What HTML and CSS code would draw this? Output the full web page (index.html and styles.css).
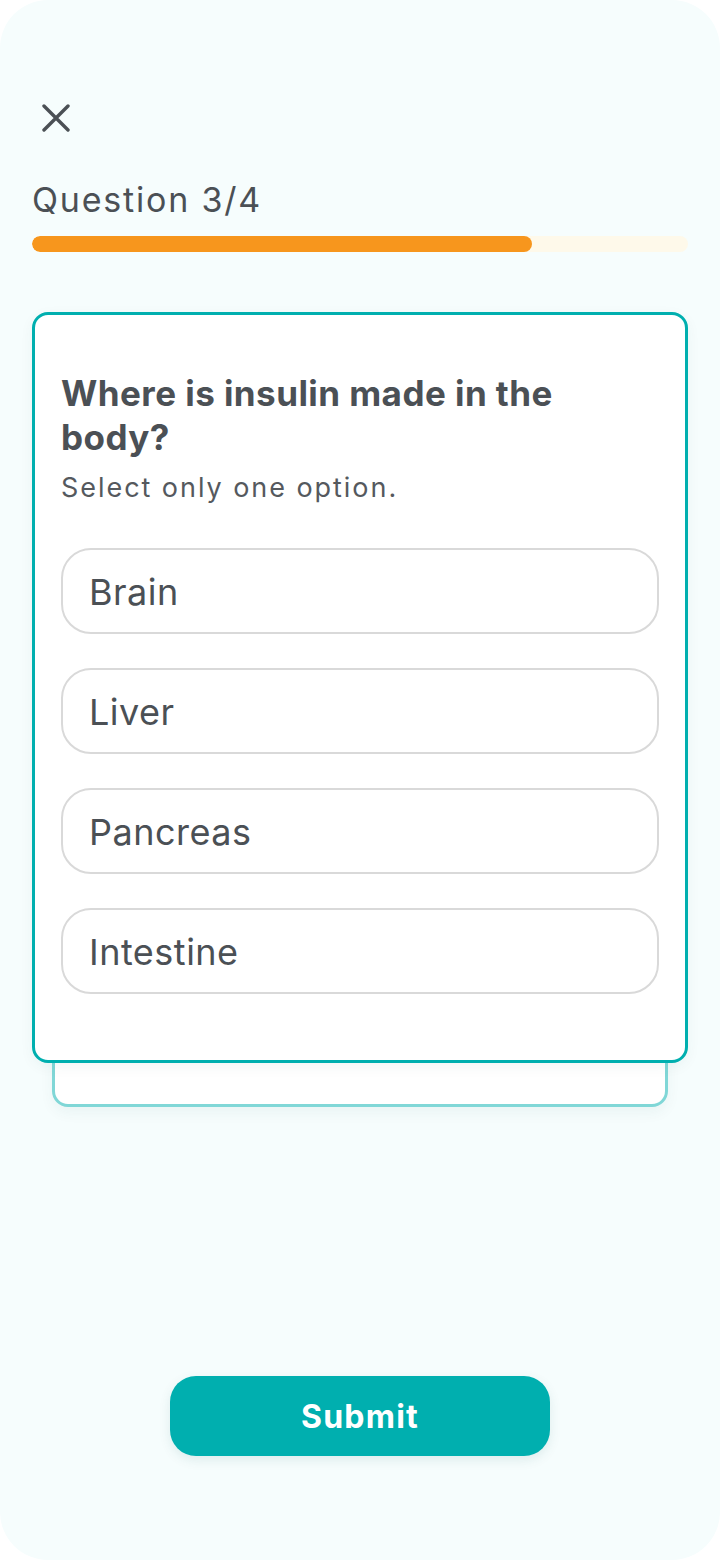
FILE: index.html
```html
<!DOCTYPE html>
<html lang="en">
<head>
<meta charset="utf-8">
<title>Quiz</title>
<link rel="stylesheet" href="styles.css">
</head>
<body>
<main class="frame">
  <button class="close" aria-label="Close">
    <svg viewBox="0 0 28 28" width="28" height="28"><path d="M2 2 L26 26 M26 2 L2 26" stroke="#4b5055" stroke-width="3.4" stroke-linecap="round" fill="none"/></svg>
  </button>
  <div class="counter">Question 3/4</div>
  <div class="progress"><div class="progress-fill" style="width: 76.2%"></div></div>

  <section class="stack">
    <div class="card">
      <h1 class="title">Where is insulin made in the body?</h1>
      <p class="hint">Select only one option.</p>
      <ul class="options">
        <li class="option">Brain</li>
        <li class="option">Liver</li>
        <li class="option">Pancreas</li>
        <li class="option">Intestine</li>
      </ul>
    </div>
    <div class="card-back"></div>
  </section>

  <div class="actions">
    <button class="submit">Submit</button>
  </div>
</main>
</body>
</html>
```

FILE: styles.css
```css
* { box-sizing: border-box; }

html, body {
  margin: 0;
  padding: 0;
  background: #ffffff;
}

body {
  font-family: Inter, "Noto Sans", "Liberation Sans", sans-serif;
  color: #4b5055;
}

.frame {
  width: 720px;
  height: 1560px;
  border-radius: 48px;
  background: #f6fdfd;
  padding: 0 32px 104px;
  display: flex;
  flex-direction: column;
  overflow: hidden;
}

.close {
  margin: 104px 0 0 10px;
  padding: 0;
  border: 0;
  background: none;
  width: 28px;
  height: 28px;
  display: block;
}

.close svg { display: block; }

.counter {
  margin-top: 48px;
  font-size: 34px;
  line-height: 40px;
  letter-spacing: 1.8px;
  color: #4b5055;
}

.progress {
  margin-top: 16px;
  height: 16px;
  border-radius: 8px;
  background: #fef9ea;
  overflow: hidden;
}

.progress-fill {
  height: 100%;
  border-radius: 8px;
  background: #f7961d;
}

.stack {
  margin-top: 60px;
  display: flex;
  flex-direction: column;
}

.card {
  position: relative;
  z-index: 2;
  background: #ffffff;
  border: 3.5px solid #00afaf;
  border-radius: 16px;
  padding: 56px 26px 66px;
  box-shadow: 0 4px 14px rgba(0, 80, 80, 0.05);
}

.title {
  margin: 0;
  max-width: 540px;
  font-size: 35px;
  line-height: 44px;
  font-weight: 700;
  letter-spacing: 0.45px;
  color: #4b5055;
}

.hint {
  margin: 13px 0 0;
  font-size: 27px;
  line-height: 32px;
  letter-spacing: 1.95px;
  color: #55595e;
}

.options {
  list-style: none;
  margin: 44px 0 0;
  padding: 0;
  display: flex;
  flex-direction: column;
  gap: 34px;
}

.option {
  height: 86px;
  border: 2px solid #d9d9d9;
  border-radius: 30px;
  padding: 2px 26px 0;
  display: flex;
  align-items: center;
  font-size: 36px;
  letter-spacing: 0.5px;
  color: #4b5055;
  background: #ffffff;
}

.card-back {
  position: relative;
  z-index: 1;
  margin: -40px 20px 0;
  height: 84px;
  background: #ffffff;
  border: 3.5px solid #80d7d7;
  border-radius: 16px;
  box-shadow: 0 6px 14px rgba(0, 80, 80, 0.05);
}

.actions {
  margin-top: auto;
  display: flex;
  justify-content: center;
}

.submit {
  width: 380px;
  height: 80px;
  border: 0;
  border-radius: 26px;
  background: #00afaf;
  color: #ffffff;
  font-family: Inter, "Noto Sans", "Liberation Sans", sans-serif;
  font-size: 32px;
  font-weight: 700;
  letter-spacing: 1.2px;
  box-shadow: 0 4px 12px rgba(0, 90, 90, 0.1);
}
```
